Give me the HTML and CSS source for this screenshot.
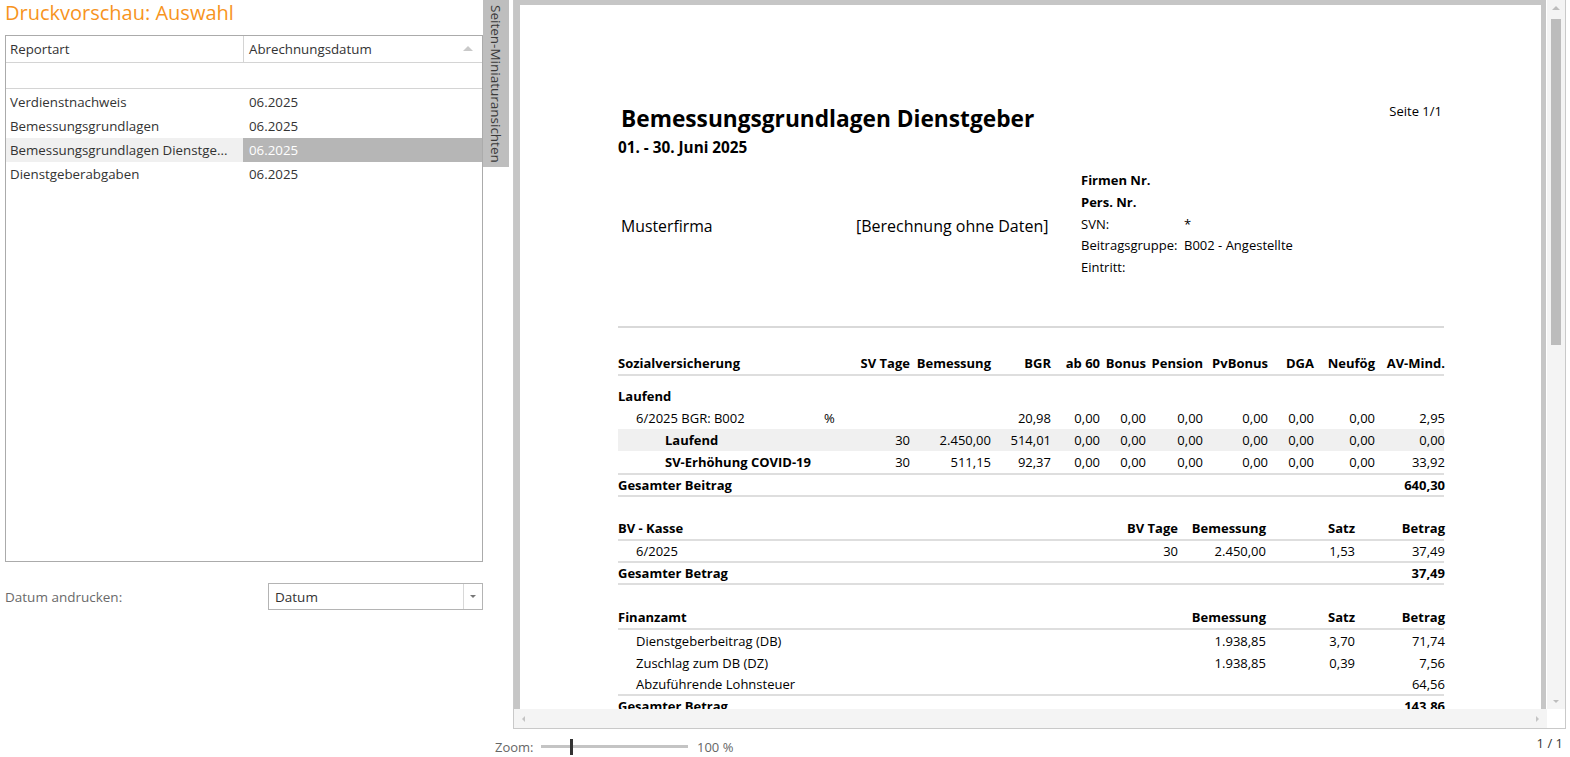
FILE: index.html
```html
<!DOCTYPE html>
<html lang="de">
<head>
<meta charset="utf-8">
<title>Druckvorschau</title>
<link rel="stylesheet" href="styles.css">
</head>
<body>
<div class="app">
  <aside class="sidebar">
    <h1 class="title">Druckvorschau: Auswahl</h1>
    <div class="grid">
      <div class="grid-head">
        <div class="col-a">Reportart</div>
        <div class="col-b">Abrechnungsdatum<span class="sort"></span></div>
      </div>
      <div class="grid-filter"></div>
      <div class="grid-body">
        <div class="grow"><div class="col-a">Verdienstnachweis</div><div class="col-b">06.2025</div></div>
        <div class="grow"><div class="col-a">Bemessungsgrundlagen</div><div class="col-b">06.2025</div></div>
        <div class="grow selected"><div class="col-a">Bemessungsgrundlagen Dienstge...</div><div class="col-b">06.2025</div></div>
        <div class="grow"><div class="col-a">Dienstgeberabgaben</div><div class="col-b">06.2025</div></div>
      </div>
    </div>
    <div class="option">
      <span class="option-label">Datum andrucken:</span>
      <div class="combo"><span class="combo-text">Datum</span><span class="combo-btn"><span class="tri-down"></span></span></div>
    </div>
  </aside>

  <div class="tab"><span class="tab-text">Seiten-Miniaturansichten</span></div>

  <main class="preview">
    <div class="canvas">
      <div class="page">
        <div class="rhead">
          <div class="rtitle">Bemessungsgrundlagen Dienstgeber</div>
          <div class="rpage">Seite 1/1</div>
        </div>
        <div class="rdate">01. - 30. Juni 2025</div>

        <div class="info">
          <div class="firm">Musterfirma</div>
          <div class="calc">[Berechnung ohne Daten]</div>
          <div class="meta">
            <div class="b">Firmen Nr.</div><div></div>
            <div class="b">Pers. Nr.</div><div></div>
            <div>SVN:</div><div>*</div>
            <div>Beitragsgruppe:</div><div>B002 - Angestellte</div>
            <div>Eintritt:</div><div></div>
          </div>
        </div>
        <div class="hr"></div>

        <section class="sv">
          <div class="svrow head">
            <div class="l">Sozialversicherung</div><div>SV Tage</div><div>Bemessung</div><div>BGR</div><div>ab 60</div><div>Bonus</div><div>Pension</div><div>PvBonus</div><div>DGA</div><div>Neufög</div><div>AV-Mind.</div>
          </div>
          <div class="svrow group"><div class="l">Laufend</div></div>
          <div class="svrow">
            <div class="l ind"><span class="pct-label">6/2025 BGR: B002</span>%</div><div></div><div></div><div>20,98</div><div>0,00</div><div>0,00</div><div>0,00</div><div>0,00</div><div>0,00</div><div>0,00</div><div>2,95</div>
          </div>
          <div class="svrow shade">
            <div class="l ind2 b">Laufend</div><div>30</div><div>2.450,00</div><div>514,01</div><div>0,00</div><div>0,00</div><div>0,00</div><div>0,00</div><div>0,00</div><div>0,00</div><div>0,00</div>
          </div>
          <div class="svrow line">
            <div class="l ind2 b">SV-Erhöhung COVID-19</div><div>30</div><div>511,15</div><div>92,37</div><div>0,00</div><div>0,00</div><div>0,00</div><div>0,00</div><div>0,00</div><div>0,00</div><div>33,92</div>
          </div>
          <div class="svrow line total">
            <div class="l">Gesamter Beitrag</div><div></div><div></div><div></div><div></div><div></div><div></div><div></div><div></div><div></div><div>640,30</div>
          </div>
        </section>

        <section class="bv">
          <div class="bvrow head">
            <div class="l">BV - Kasse</div><div>BV Tage</div><div>Bemessung</div><div>Satz</div><div>Betrag</div>
          </div>
          <div class="bvrow line">
            <div class="l ind">6/2025</div><div>30</div><div>2.450,00</div><div>1,53</div><div>37,49</div>
          </div>
          <div class="bvrow line total">
            <div class="l">Gesamter Betrag</div><div></div><div></div><div></div><div>37,49</div>
          </div>
        </section>

        <section class="bv fa">
          <div class="bvrow head">
            <div class="l">Finanzamt</div><div></div><div>Bemessung</div><div>Satz</div><div>Betrag</div>
          </div>
          <div class="bvrow">
            <div class="l ind">Dienstgeberbeitrag (DB)</div><div></div><div>1.938,85</div><div>3,70</div><div>71,74</div>
          </div>
          <div class="bvrow">
            <div class="l ind">Zuschlag zum DB (DZ)</div><div></div><div>1.938,85</div><div>0,39</div><div>7,56</div>
          </div>
          <div class="bvrow line">
            <div class="l ind">Abzuführende Lohnsteuer</div><div></div><div></div><div></div><div>64,56</div>
          </div>
          <div class="bvrow line total">
            <div class="l">Gesamter Betrag</div><div></div><div></div><div></div><div>143,86</div>
          </div>
        </section>
      </div>
    </div>
    <div class="vscroll">
      <span class="tri-up small"></span>
      <div class="vthumb"></div>
      <span class="tri-down small"></span>
    </div>
    <div class="hscroll">
      <span class="tri-left"></span>
      <span class="tri-right"></span>
    </div>
    <div class="corner"></div>
  </main>

  <footer class="status">
    <span class="zoom-label">Zoom:</span>
    <div class="slider"><div class="track"></div><div class="knob"></div></div>
    <span class="zoom-val">100 %</span>
    <span class="pages">1 / 1</span>
  </footer>
</div>
</body>
</html>
```

FILE: styles.css
```css
* { box-sizing: border-box; }
html, body { margin: 0; padding: 0; }
body {
  width: 1570px;
  height: 757px;
  overflow: hidden;
  background: #ffffff;
  font-family: "Open Sans", "Noto Sans", sans-serif;
  color: #333333;
}

.app {
  display: grid;
  grid-template-columns: 483px 30px 1fr;
  grid-template-rows: 729px 28px;
  height: 757px;
}

/* ---------- sidebar ---------- */
.sidebar {
  grid-column: 1;
  grid-row: 1 / span 2;
  padding-left: 5px;
}
.title {
  margin: 0;
  height: 35px;
  font-size: 20px;
  font-weight: 400;
  line-height: 26px;
  color: #f7941d;
}
.grid {
  height: 527px;
  border: 1px solid #ababab;
  display: flex;
  flex-direction: column;
}
.grid-head {
  display: flex;
  height: 27px;
  border-bottom: 1px solid #d4d4d4;
  font-size: 13.3px;
  line-height: 26px;
}
.grid-head .col-b {
  border-left: 1px solid #d4d4d4;
  position: relative;
}
.sort {
  position: absolute;
  right: 9px;
  top: 10px;
  width: 0;
  height: 0;
  border-left: 5px solid transparent;
  border-right: 5px solid transparent;
  border-bottom: 5px solid #c9c9c9;
}
.col-a {
  width: 237px;
  padding-left: 4px;
  white-space: nowrap;
  overflow: hidden;
}
.col-b {
  flex: 1;
  padding-left: 5px;
}
.grid-filter {
  height: 26px;
  border-bottom: 1px solid #d4d4d4;
}
.grid-body { padding-top: 1px; }
.grow {
  display: flex;
  height: 24px;
  font-size: 13.3px;
  line-height: 24px;
}
.grow .col-b { padding-left: 6px; }
.grow.selected .col-a { background: #f0f0f0; }
.grow.selected .col-b { background: #b6b6b6; color: #ffffff; }

.option {
  display: flex;
  align-items: center;
  margin-top: 21px;
  height: 27px;
}
.option-label {
  width: 263px;
  font-size: 13.5px;
  color: #6a6a6a;
}
.combo {
  flex: 1;
  height: 27px;
  border: 1px solid #b4b4b4;
  display: flex;
  align-items: center;
}
.combo-text {
  flex: 1;
  padding-left: 6px;
  font-size: 13.5px;
  color: #333;
}
.combo-btn {
  width: 19px;
  height: 25px;
  border-left: 1px solid #d8d8d8;
  display: flex;
  align-items: center;
  justify-content: center;
}
.tri-down {
  width: 0; height: 0;
  border-left: 3px solid transparent;
  border-right: 3px solid transparent;
  border-top: 3px solid #777;
}

/* ---------- tab ---------- */
.tab {
  grid-column: 2;
  grid-row: 1;
  width: 26px;
  height: 167px;
  background: #bebebe;
  display: flex;
  justify-content: center;
  padding-top: 5px;
}
.tab-text {
  writing-mode: vertical-rl;
  font-size: 13.5px;
  line-height: 26px;
  color: #3a3a3a;
  white-space: nowrap;
}

/* ---------- preview ---------- */
.preview {
  grid-column: 3;
  grid-row: 1;
  margin-right: 4px;
  border: 1px solid #c9c9c9;
  border-top: none;
  display: grid;
  grid-template-columns: 1fr 18px;
  grid-template-rows: 1fr 19px;
  overflow: hidden;
}
.canvas {
  background: #c6c6c6;
  padding: 5px 5px 0 6px;
  overflow: hidden;
  border-right: 1px solid #ffffff;
}
.page {
  background: #ffffff;
  height: 900px;
  padding: 100px 97px 0 98px;
  color: #000000;
  font-size: 13px;
}
.rhead {
  display: flex;
  justify-content: space-between;
  align-items: flex-start;
}
.rtitle {
  margin-left: 3px;
  font-size: 22.7px;
  font-weight: 700;
  line-height: 28px;
}
.rpage {
  margin-top: -3px;
  margin-right: 2px;
  line-height: 18px;
}
.rdate {
  margin-top: 4px;
  font-size: 15.3px;
  font-weight: 700;
  line-height: 20px;
}
.info {
  display: flex;
  align-items: center;
  margin-top: 13px;
}
.firm {
  width: 235px;
  margin-left: 3px;
  font-size: 15.8px;
  padding-top: 4px;
}
.calc {
  width: 224px;
  font-size: 16px;
  padding-top: 4px;
}
.meta {
  display: grid;
  grid-template-columns: 103px auto;
  line-height: 21.75px;
  font-size: 13px;
  margin-left: 1px;
}
.b { font-weight: 700; }
.hr {
  margin-top: 47px;
  border-top: 2px solid #d9d9d9;
}

.sv { margin-top: 25px; }
.svrow {
  display: grid;
  grid-template-columns: 240px 52px 81px 60px 49px 46px 57px 65px 46px 61px 70px;
  height: 22px;
  line-height: 22px;
  white-space: nowrap;
}
.svrow > div { text-align: right; }
.svrow > div.l { text-align: left; }
.svrow.head {
  height: 23px;
  line-height: 21px;
  font-weight: 700;
  border-bottom: 2px solid #dedede;
  margin-bottom: 9px;
}
.svrow.group { font-weight: 700; }
.svrow.shade { background: #f0f0f0; }
.svrow.line {
  border-bottom: 2px solid #dedede;
}
.svrow.line:not(.total) { height: 24px; }
.svrow.total { font-weight: 700; line-height: 20px; }
.ind { padding-left: 18px; }
.ind2 { padding-left: 47px; }
.pct-label { display: inline-block; width: 188px; }

.bv { margin-top: 21px; }
.bv.fa { margin-top: 22px; }
.bvrow {
  display: grid;
  grid-template-columns: 484px 76px 88px 89px 90px;
  height: 22px;
  line-height: 22px;
  white-space: nowrap;
}
.bvrow > div { text-align: right; }
.bvrow > div.l { text-align: left; }
.bvrow.head {
  height: 23px;
  line-height: 21px;
  font-weight: 700;
  border-bottom: 2px solid #dedede;
}
.bvrow.line {
  border-bottom: 2px solid #dedede;
  line-height: 20px;
}
.bvrow.total { font-weight: 700; }

/* scrollbars */
.vscroll {
  background: #f4f4f4;
  display: flex;
  flex-direction: column;
  align-items: center;
  padding-top: 6px;
  padding-bottom: 6px;
}
.tri-up {
  width: 0; height: 0;
  border-left: 4px solid transparent;
  border-right: 4px solid transparent;
  border-bottom: 4px solid #bdbdbd;
}
.vthumb {
  width: 10px;
  height: 326px;
  margin-top: 9px;
  background: #bcbcbc;
}
.vscroll .tri-down {
  margin-top: auto;
  border-top-color: #bdbdbd;
}
.hscroll {
  background: #f4f4f4;
  display: flex;
  align-items: center;
  justify-content: space-between;
  padding: 0 8px;
}
.tri-left {
  width: 0; height: 0;
  border-top: 3px solid transparent;
  border-bottom: 3px solid transparent;
  border-right: 3px solid #c4c4c4;
}
.tri-right {
  width: 0; height: 0;
  border-top: 3px solid transparent;
  border-bottom: 3px solid transparent;
  border-left: 3px solid #c4c4c4;
}
.corner { background: #ffffff; }

/* status */
.status {
  grid-column: 2 / span 2;
  grid-row: 2;
  display: flex;
  align-items: center;
  padding-left: 12px;
  padding-right: 7px;
  padding-top: 8px;
  font-size: 13px;
  color: #666666;
}
.zoom-label { width: 46px; }
.slider {
  position: relative;
  width: 147px;
  height: 16px;
}
.track {
  position: absolute;
  left: 0; right: 0;
  top: 6px;
  height: 3px;
  background: #c4c4c4;
}
.knob {
  position: absolute;
  left: 29px;
  top: 0;
  width: 3px;
  height: 16px;
  background: #333333;
}
.zoom-val { margin-left: 9px; }
.pages {
  margin-left: auto;
  color: #333;
  margin-top: -8px;
}
```
